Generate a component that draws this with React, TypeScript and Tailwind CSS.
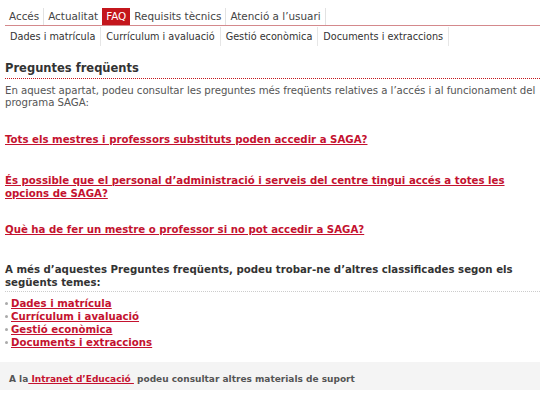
import React from "react";

const font = { fontFamily: '"DejaVu Sans", Verdana, sans-serif' };

export default function App() {
  const tabs = ["Accés", "Actualitat", "FAQ", "Requisits tècnics", "Atenció a l’usuari"];
  const sub = ["Dades i matrícula", "Currículum i avaluació", "Gestió econòmica", "Documents i extraccions"];
  return (
    <div className="w-[540px] h-[397px] bg-white overflow-hidden text-[10.2px] text-[#555]" style={font}>
      <div className="pt-[8px] pl-[5px]">
        <div className="flex border-b border-[#d4898c] h-[18px]">
          {tabs.map((t, i) => (
            <div
              key={t}
              className={
                "px-[4px] leading-[17px] text-[10.4px] " +
                (t === "FAQ" ? "bg-[#c4161c] text-white" : "text-[#444] ") +
                (i < tabs.length - 1 && t !== "FAQ" && tabs[i + 1] !== "FAQ" ? " border-r border-[#e2e2e2]" : "") +
                (i === tabs.length - 1 ? " border-r border-[#e2e2e2]" : "")
              }
            >
              {t}
            </div>
          ))}
        </div>
        <div className="flex h-[19px] mt-[1px]">
          {sub.map((t) => (
            <div key={t} className="px-[5px] leading-[19px] text-[9.7px] text-[#333] border-r border-[#e6e6e6]">
              {t}
            </div>
          ))}
        </div>
      </div>

      <div className="pl-[5px] pt-[15px]">
        <h1 className="text-[11.5px] font-bold text-[#333] leading-[15px] pb-[2px] border-b border-dotted border-[#c4161c]">
          Preguntes freqüents
        </h1>
        <p className="mt-[6px] leading-[12px] tracking-[-0.05px]">
          En aquest apartat, podeu consultar les preguntes més freqüents relatives a l’accés i al funcionament del programa SAGA:
        </p>

        <div className="mt-[24px] flex flex-col pr-[20px]">
          <a className="font-bold text-[#c4122f] underline leading-[13px]">Tots els mestres i professors substituts poden accedir a SAGA?</a>
          <a className="mt-[28px] font-bold text-[#c4122f] underline leading-[13px]">
            És possible que el personal d’administració i serveis del centre tingui accés a totes les opcions de SAGA?
          </a>
          <a className="mt-[23px] font-bold text-[#c4122f] underline leading-[13px]">Què ha de fer un mestre o professor si no pot accedir a SAGA?</a>
        </div>

        <div className="mt-[27px] font-bold text-[#333] leading-[13px] pb-[2px] border-b border-dotted border-[#ccc] pr-[20px]">
          A més d’aquestes Preguntes freqüents, podeu trobar-ne d’altres classificades segon els següents temes:
        </div>
        <ul className="mt-[5px] flex flex-col">
          {sub.map((t) => (
            <li key={t} className="flex items-center leading-[13px]">
              <span className="w-[3px] h-[3px] rounded-full bg-[#aaa] mr-[3px]" />
              <a className="font-bold text-[#c4122f] underline">{t}</a>
            </li>
          ))}
        </ul>
      </div>

      <div className="mt-[13px] bg-[#f4f4f4] h-[28px] pl-[9px] pt-[11px] text-[9px] font-bold text-[#555] leading-[13px] whitespace-pre">
        A la<a className="text-[#c4122f] underline"> Intranet d’Educació </a> podeu consultar altres materials de suport
      </div>
    </div>
  );
}
